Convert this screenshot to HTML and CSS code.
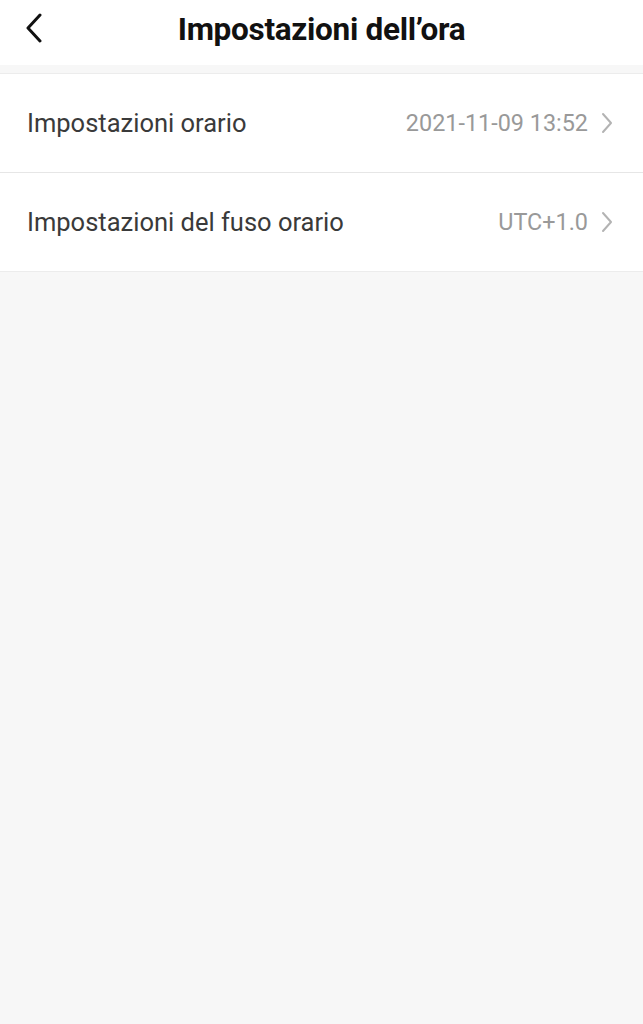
FILE: index.html
```html
<!DOCTYPE html>
<html lang="it">
<head>
    <meta charset="UTF-8">
    <meta name="viewport" content="width=device-width, initial-scale=1.0">
    <title>Impostazioni dell’ora</title>
    <link rel="stylesheet" href="styles.css">
</head>
<body>
    <header class="top-bar">
        <button class="back-btn" aria-label="Indietro">
            <svg width="20" height="30" viewBox="0 0 20 30">
                <path d="M16 2 L4 15 L16 28" fill="none" stroke="#111" stroke-width="3" stroke-linecap="round" stroke-linejoin="round"/>
            </svg>
        </button>
        <h1 class="title">Impostazioni dell’ora</h1>
    </header>

    <div class="settings-list">
        <div class="setting-row">
            <span class="setting-label">Impostazioni orario</span>
            <span class="setting-value">2021-11-09 13:52</span>
            <svg class="chevron" width="12" height="22" viewBox="0 0 12 22">
                <path d="M2 2 L10 11 L2 20" fill="none" stroke="#b3b3b3" stroke-width="2" stroke-linecap="round" stroke-linejoin="round"/>
            </svg>
        </div>
        <div class="setting-row">
            <span class="setting-label">Impostazioni del fuso orario</span>
            <span class="setting-value">UTC+1.0</span>
            <svg class="chevron" width="12" height="22" viewBox="0 0 12 22">
                <path d="M2 2 L10 11 L2 20" fill="none" stroke="#b3b3b3" stroke-width="2" stroke-linecap="round" stroke-linejoin="round"/>
            </svg>
        </div>
    </div>
</body>
</html>
```

FILE: styles.css
```css
html, body {
    margin: 0;
    padding: 0;
    background: #f7f7f7;
    font-family: Roboto, "Noto Sans", sans-serif;
    min-height: 100vh;
}
.top-bar {
    background: #ffffff;
    height: 65px;
    box-sizing: border-box;
    padding-bottom: 6px;
    display: flex;
    align-items: center;
    justify-content: center;
    position: relative;
    margin-bottom: 8px;
}
.back-btn {
    position: absolute;
    left: 24px;
    top: 13px;
    background: none;
    border: none;
    padding: 0;
    width: 20px;
    height: 30px;
}
.title {
    margin: 0;
    font-size: 31.5px;
    font-weight: 700;
    color: #111;
    letter-spacing: -0.3px;
}
.settings-list {
    background: #ffffff;
    border-top: 1px solid #ececec;
    border-bottom: 1px solid #ececec;
}
.setting-row {
    height: 98px;
    display: flex;
    align-items: center;
    padding: 0 30px 0 27px;
}
.setting-row + .setting-row {
    border-top: 1px solid #e6e6e6;
}
.setting-label {
    flex: 1;
    font-size: 25.5px;
    color: #3a3a3a;
}
.setting-value {
    font-size: 23.4px;
    color: #999;
    margin-right: 13px;
}
.chevron {
    display: block;
}
```
